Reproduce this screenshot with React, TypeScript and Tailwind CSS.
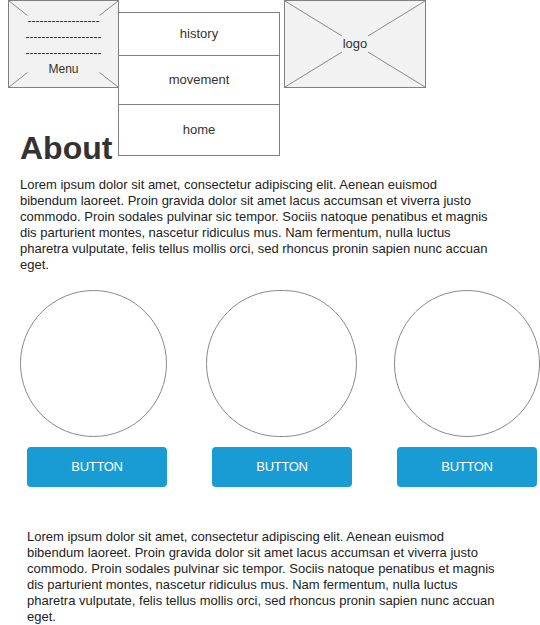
import React from 'react';

const lorem =
  'Lorem ipsum dolor sit amet, consectetur adipiscing elit. Aenean euismod bibendum laoreet. Proin gravida dolor sit amet lacus accumsan et viverra justo commodo. Proin sodales pulvinar sic tempor. Sociis natoque penatibus et magnis dis parturient montes, nascetur ridiculus mus. Nam fermentum, nulla luctus pharetra vulputate, felis tellus mollis orci, sed rhoncus pronin sapien nunc accuan eget.';

function MenuBox() {
  return (
    <div className="relative w-[111px] h-[88px] border border-[#808080] bg-[#f2f2f2]">
      {/* placeholder cross, cut where the content sits */}
      <svg className="absolute inset-0" width="109" height="86" viewBox="0 0 109 86">
        <g stroke="#8a8a8a" strokeWidth="1">
          <line x1="0" y1="0" x2="18.5" y2="14.5" />
          <line x1="109" y1="0" x2="90.5" y2="14.5" />
          <line x1="0" y1="86" x2="18.5" y2="71.5" />
          <line x1="109" y1="86" x2="90.5" y2="71.5" />
        </g>
      </svg>
      <div className="relative flex flex-col items-center pt-[12px] text-[12px] leading-[16px] text-[#333]">
        <span>------------------</span>
        <span>-------------------</span>
        <span>-------------------</span>
        <span>Menu</span>
      </div>
      {/* dropdown */}
      <div className="absolute left-full top-[11px] w-[162px] border border-[#808080] bg-white text-[13px] text-[#333] flex flex-col">
        <div className="h-[43px] border-b border-[#808080] flex items-center justify-center">history</div>
        <div className="h-[49px] border-b border-[#808080] flex items-center justify-center">movement</div>
        <div className="h-[50px] flex items-center justify-center">home</div>
      </div>
    </div>
  );
}

function LogoBox() {
  return (
    <div className="relative w-[142px] h-[88px] border border-[#808080] bg-[#f2f2f2] flex items-center justify-center">
      <svg className="absolute inset-0" width="140" height="86" viewBox="0 0 140 86">
        <g stroke="#8a8a8a" strokeWidth="1">
          <line x1="0" y1="0" x2="57" y2="35" />
          <line x1="140" y1="0" x2="83" y2="35" />
          <line x1="0" y1="86" x2="57" y2="51" />
          <line x1="140" y1="86" x2="83" y2="51" />
        </g>
      </svg>
      <span className="relative text-[13px] text-[#333]">logo</span>
    </div>
  );
}

export default function App() {
  return (
    <div className="w-[540px] h-[625px] overflow-hidden bg-white font-['Liberation_Sans',Arial,sans-serif] text-[#333]">
      <div className="flex pl-[8px]">
        <MenuBox />
        <div className="ml-[165px]">
          <LogoBox />
        </div>
      </div>

      <h1 className="mt-[44px] pl-[20px] text-[32px] leading-[32px] font-bold">About</h1>

      <p className="mt-[13px] ml-[20px] w-[472px] text-[13px] leading-[16px] text-[#222]">{lorem}</p>

      <div className="mt-[17px] flex pl-[20px]">
        <div className="w-[147px] h-[147px] rounded-full border border-[#8a8a8a]" />
        <div className="ml-[39px] w-[151px] h-[147px] rounded-full border border-[#8a8a8a]" />
        <div className="ml-[37px] w-[146px] h-[147px] rounded-full border border-[#8a8a8a]" />
      </div>

      <div className="mt-[10px] flex pl-[27px] gap-[45px]">
        {[0, 1, 2].map((i) => (
          <button
            key={i}
            className="w-[140px] h-[40px] rounded-[4px] bg-[#199bd4] text-white text-[13px] tracking-[-0.3px] flex items-center justify-center"
          >
            BUTTON
          </button>
        ))}
      </div>

      <p className="mt-[42px] ml-[27px] w-[472px] text-[13px] leading-[16px] text-[#222]">{lorem}</p>
    </div>
  );
}
